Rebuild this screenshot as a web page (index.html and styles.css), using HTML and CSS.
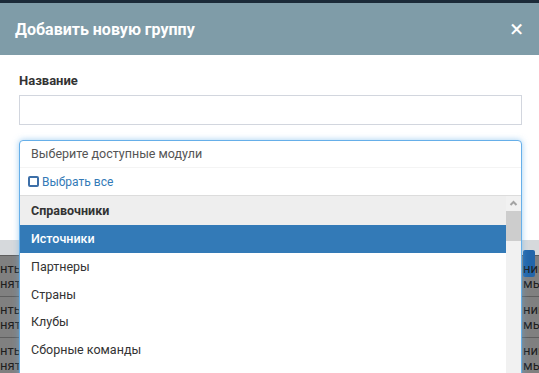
FILE: index.html
```html
<!DOCTYPE html>
<html lang="ru">
<head>
  <meta charset="UTF-8" />
  <title>Добавить новую группу</title>
  <link rel="stylesheet" href="styles.css">
</head>
<body>

  <!-- page behind the modal -->
  <div class="page">
    <div class="page-top">
      <div class="page-btn"></div>
    </div>
    <div class="page-row">
      <div class="cell-left">нты,<br>нятия</div>
      <div class="cell-right">нины,<br>мы,</div>
    </div>
    <div class="page-row">
      <div class="cell-left">нты,<br>нятия</div>
      <div class="cell-right">нины,<br>мы,</div>
    </div>
    <div class="page-row">
      <div class="cell-left">нты,<br>нятия</div>
      <div class="cell-right">нины,<br>мы,</div>
    </div>
  </div>

  <div class="modal">
    <div class="modal-header">
      <span class="modal-title">Добавить новую группу</span>
      <span class="modal-close">&times;</span>
    </div>
    <div class="modal-body">
      <label class="field-label">Название</label>
      <input class="field-input" type="text">

      <div class="ms">
        <div class="ms-search">Выберите доступные модули</div>
        <div class="ms-all"><span class="ms-check"></span>Выбрать все</div>
        <div class="ms-list">
          <div class="ms-options">
            <div class="ms-group">Справочники</div>
            <div class="ms-item selected">Источники</div>
            <div class="ms-item">Партнеры</div>
            <div class="ms-item">Страны</div>
            <div class="ms-item">Клубы</div>
            <div class="ms-item">Сборные команды</div>
          </div>
          <div class="ms-scroll">
            <svg class="arrow" width="15" height="14" viewBox="0 0 15 14"><path d="M4.5 9 L7.5 6 L10.5 9" fill="none" stroke="#a3a3a3" stroke-width="2"/></svg>
            <div class="thumb"></div>
            <div class="track"></div>
            <svg class="arrow" width="15" height="14" viewBox="0 0 15 14"><path d="M4.5 5 L7.5 8 L10.5 5" fill="none" stroke="#505050" stroke-width="2"/></svg>
          </div>
        </div>
      </div>
    </div>
  </div>

</body>
</html>
```

FILE: styles.css
```css
body, html {
  margin: 0;
  padding: 0;
  font-family: Roboto, "Liberation Sans", sans-serif;
  overflow: hidden;
  height: 100%;
}

.page {
  height: 373px;
  overflow: hidden;
  background: #808080;
  border-top: 3px solid #1b2a38;
  box-sizing: border-box;
}

.page-top {
  height: 252px;
  background: #d6d9dc;
  display: flex;
  justify-content: flex-end;
  align-items: flex-end;
  padding: 0 4px 0 0;
  box-sizing: border-box;
}

.page-btn {
  width: 12px;
  height: 27px;
  background: #2266aa;
  border-radius: 2px;
  margin-bottom: -22px;
}

.page-row {
  height: 40px;
  border-top: 1px solid #5e5e5e;
  display: flex;
  justify-content: space-between;
  align-items: center;
  font-size: 13px;
  line-height: 15px;
  color: #1e1e1e;
}

.page-row:first-of-type {
  border-top: none;
}

.cell-left {
  white-space: nowrap;
}

.cell-right {
  width: 16px;
  overflow: hidden;
  white-space: nowrap;
}

.modal {
  position: absolute;
  top: 3px;
  left: 0;
  right: 0;
}

.modal-header {
  height: 52px;
  background: #7f9ca8;
  display: flex;
  align-items: center;
  justify-content: space-between;
  padding: 0 16px 0 15px;
}

.modal-title {
  color: #fff;
  font-size: 16px;
  font-weight: bold;
}

.modal-close {
  color: #fff;
  font-size: 24px;
  line-height: 1;
}

.modal-body {
  background: #fff;
  height: 185px;
  padding: 18px 17px 0 19px;
  box-sizing: border-box;
}

.field-label {
  display: block;
  font-size: 13px;
  font-weight: bold;
  color: #333;
  line-height: 16px;
}

.field-input {
  display: block;
  width: 100%;
  margin: 6px 0 0;
  height: 30px;
  border: 1px solid #d2d6de;
  box-sizing: border-box;
  padding: 0 10px;
}

.ms {
  margin-top: 15px;
  border: 1px solid #66afe9;
  border-radius: 4px 4px 0 0;
  box-shadow: 0 0 6px rgba(102, 175, 233, 0.6);
  background: #fff;
  font-size: 12.5px;
  color: #333;
}

.ms-search {
  height: 26px;
  line-height: 26px;
  padding-left: 11px;
  font-size: 12.5px;
  color: #555;
  border-bottom: 1px solid #f4f4f4;
}

.ms-all {
  height: 27px;
  display: flex;
  align-items: center;
  padding-left: 8px;
  color: #337ab7;
  font-size: 12px;
}

.ms-check {
  width: 7px;
  height: 7px;
  border: 2px solid #3d6fa8;
  border-radius: 2px;
  margin-right: 3px;
}

.ms-list {
  border-top: 1px solid #dcdcdc;
  display: flex;
  height: 200px;
}

.ms-options {
  flex: 1;
}

.ms-group {
  height: 29px;
  line-height: 29px;
  padding-left: 11px;
  background: #eee;
  font-weight: bold;
}

.ms-item {
  height: 27.5px;
  line-height: 27.5px;
  padding-left: 11px;
}

.ms-item.selected {
  height: 28px;
  line-height: 28px;
  background: #337ab7;
  color: #fff;
  font-weight: 500;
}

.ms-scroll {
  width: 15px;
  background: #f1f1f1;
  display: flex;
  flex-direction: column;
}

.arrow {
  display: block;
}

.thumb {
  height: 30px;
  background: #cdcdcd;
  margin-top: 1px;
}

.track {
  flex: 1;
}
```
